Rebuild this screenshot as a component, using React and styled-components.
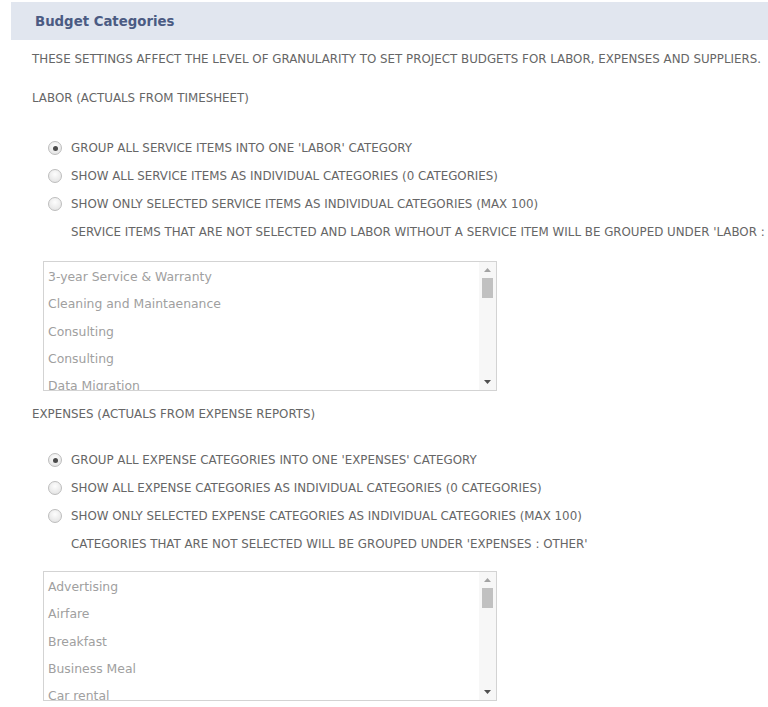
import React from "react";
import styled, { createGlobalStyle } from "styled-components";

const Global = createGlobalStyle`
  html, body { margin: 0; padding: 0; background: #fff; overflow: hidden; }
  body { font-family: "DejaVu Sans", Verdana, sans-serif; }
`;

const Page = styled.div`
  width: 768px;
  height: 707px;
  overflow: hidden;
  padding: 2px 0 0 11px;
  box-sizing: border-box;
`;

const Header = styled.div`
  height: 38px;
  line-height: 40px;
  width: 800px;
  background: #e1e6ef;
  padding-left: 24px;
  box-sizing: border-box;
  font-weight: bold;
  font-size: 13.3px;
  color: #4b5b83;
  white-space: nowrap;
`;

const Body = styled.div`
  padding-left: 21px;
`;

const Line = styled.div`
  height: 20px;
  line-height: 22px;
  margin-top: ${(p) => p.$mt || 0}px;
  font-size: 11.85px;
  color: #666;
  white-space: nowrap;
`;

const Group = styled.div`
  margin-top: ${(p) => p.$mt || 0}px;
  padding-left: 16px;
`;

const Row = styled.div`
  display: flex;
  align-items: center;
  height: 28px;
  font-size: 11.85px;
  color: #666;
  white-space: nowrap;
`;

const Note = styled(Row)`
  padding-left: 23px;
`;

const Radio = styled.span`
  width: 14px;
  height: 14px;
  border-radius: 50%;
  box-sizing: border-box;
  border: 1px solid #bdbdbd;
  background: radial-gradient(circle at 50% 35%, #fdfdfd 0%, #e8e8e8 70%, #d9d9d9 100%);
  margin-right: 9px;
  display: flex;
  align-items: center;
  justify-content: center;
  flex: none;
  &::after {
    content: "";
    width: 5px;
    height: 5px;
    border-radius: 50%;
    background: ${(p) => (p.$checked ? "#4a4a4a" : "transparent")};
  }
`;

const ListBox = styled.div`
  margin-top: ${(p) => p.$mt || 0}px;
  margin-left: 11px;
  width: 454px;
  height: 130px;
  box-sizing: border-box;
  border: 1px solid #d3d3d3;
  display: flex;
  overflow: hidden;
`;

const Items = styled.div`
  flex: 1;
  overflow: hidden;
  padding: 1px 0 0 4px;
`;

const Item = styled.div`
  height: 27.3px;
  line-height: 27.3px;
  font-size: 12.4px;
  color: #a0a0a0;
  white-space: nowrap;
`;

const ScrollBar = styled.div`
  width: 17px;
  flex: none;
  background: #f7f7f7;
  display: flex;
  flex-direction: column;
  align-items: center;
`;

const Arrow = styled.div`
  height: 16px;
  display: flex;
  align-items: center;
  justify-content: center;
  width: 100%;
`;

const Thumb = styled.div`
  width: 11px;
  height: 20px;
  background: #c1c1c1;
`;

const Spacer = styled.div`
  flex: 1;
`;

function Scroll() {
  return (
    <ScrollBar>
      <Arrow>
        <svg width="7" height="4" viewBox="0 0 7 4"><path d="M3.5 0 L7 4 L0 4 Z" fill="#a3a3a3" /></svg>
      </Arrow>
      <Thumb />
      <Spacer />
      <Arrow>
        <svg width="7" height="4" viewBox="0 0 7 4"><path d="M0 0 L7 0 L3.5 4 Z" fill="#505050" /></svg>
      </Arrow>
    </ScrollBar>
  );
}

function List({ items, mt }) {
  return (
    <ListBox $mt={mt}>
      <Items>
        {items.map((t, i) => (
          <Item key={i}>{t}</Item>
        ))}
      </Items>
      <Scroll />
    </ListBox>
  );
}

export default function App() {
  return (
    <>
      <Global />
      <Page>
        <Header>Budget Categories</Header>
        <Body>
          <Line $mt={8}>
            THESE SETTINGS AFFECT THE LEVEL OF GRANULARITY TO SET PROJECT BUDGETS FOR LABOR, EXPENSES AND SUPPLIERS.
          </Line>
          <Line $mt={19}>LABOR (ACTUALS FROM TIMESHEET)</Line>
          <Group $mt={27}>
            <Row><Radio $checked />GROUP ALL SERVICE ITEMS INTO ONE 'LABOR' CATEGORY</Row>
            <Row><Radio />SHOW ALL SERVICE ITEMS AS INDIVIDUAL CATEGORIES (0 CATEGORIES)</Row>
            <Row><Radio />SHOW ONLY SELECTED SERVICE ITEMS AS INDIVIDUAL CATEGORIES (MAX 100)</Row>
            <Note>SERVICE ITEMS THAT ARE NOT SELECTED AND LABOR WITHOUT A SERVICE ITEM WILL BE GROUPED UNDER 'LABOR : OTHER'</Note>
          </Group>
          <List
            mt={15}
            items={["3-year Service & Warranty", "Cleaning and Maintaenance", "Consulting", "Consulting", "Data Migration"]}
          />
          <Line $mt={12}>EXPENSES (ACTUALS FROM EXPENSE REPORTS)</Line>
          <Group $mt={23}>
            <Row><Radio $checked />GROUP ALL EXPENSE CATEGORIES INTO ONE 'EXPENSES' CATEGORY</Row>
            <Row><Radio />SHOW ALL EXPENSE CATEGORIES AS INDIVIDUAL CATEGORIES (0 CATEGORIES)</Row>
            <Row><Radio />SHOW ONLY SELECTED EXPENSE CATEGORIES AS INDIVIDUAL CATEGORIES (MAX 100)</Row>
            <Note>CATEGORIES THAT ARE NOT SELECTED WILL BE GROUPED UNDER 'EXPENSES : OTHER'</Note>
          </Group>
          <List
            mt={13}
            items={["Advertising", "Airfare", "Breakfast", "Business Meal", "Car rental"]}
          />
        </Body>
      </Page>
    </>
  );
}
